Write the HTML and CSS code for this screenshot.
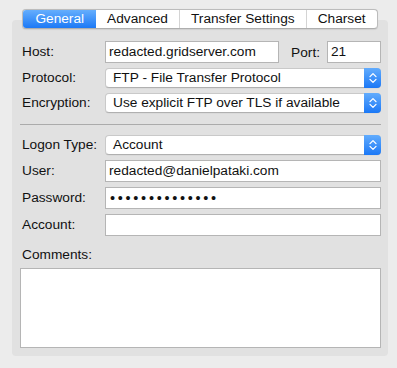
FILE: index.html
```html
<!DOCTYPE html>
<html>
<head>
<meta charset="utf-8">
<link rel="stylesheet" href="styles.css">
</head>
<body>
<div class="window">
  <div class="tabs">
    <div class="tab active">General</div>
    <div class="tab">Advanced</div>
    <div class="tab">Transfer Settings</div>
    <div class="tab">Charset</div>
  </div>
  <div class="panel">
    <div class="form">
      <div class="label">Host:</div>
      <div class="host-row">
        <div class="field host">redacted.gridserver.com</div>
        <div class="port-label">Port:</div>
        <div class="field port">21</div>
      </div>

      <div class="label">Protocol:</div>
      <div class="select"><span class="select-text">FTP - File Transfer Protocol</span><span class="stepper"><svg width="16" height="20" viewBox="0 0 16 20"><path d="M5 8.6 L8 5.6 L11 8.6 M5 11.4 L8 14.4 L11 11.4" fill="none" stroke="#fff" stroke-width="1.3" stroke-linecap="round" stroke-linejoin="round"/></svg></span></div>

      <div class="label">Encryption:</div>
      <div class="select"><span class="select-text">Use explicit FTP over TLS if available</span><span class="stepper"><svg width="16" height="20" viewBox="0 0 16 20"><path d="M5 8.6 L8 5.6 L11 8.6 M5 11.4 L8 14.4 L11 11.4" fill="none" stroke="#fff" stroke-width="1.3" stroke-linecap="round" stroke-linejoin="round"/></svg></span></div>

      <div class="separator"></div>

      <div class="label">Logon Type:</div>
      <div class="select"><span class="select-text">Account</span><span class="stepper"><svg width="16" height="20" viewBox="0 0 16 20"><path d="M5 8.6 L8 5.6 L11 8.6 M5 11.4 L8 14.4 L11 11.4" fill="none" stroke="#fff" stroke-width="1.3" stroke-linecap="round" stroke-linejoin="round"/></svg></span></div>

      <div class="label">User:</div>
      <div class="field">redacted@danielpataki.com</div>

      <div class="label">Password:</div>
      <div class="field password">••••••••••••••</div>

      <div class="label">Account:</div>
      <div class="field"></div>

      <div class="label comments-label">Comments:</div>
      <div class="textarea"></div>
    </div>
  </div>
</div>
</body>
</html>
```

FILE: styles.css
```css
* { box-sizing: border-box; }

html, body {
  margin: 0;
  background: #ececec;
}

body {
  font-family: "Liberation Sans", Arial, sans-serif;
  font-size: 13.7px;
  color: #111;
}

.window {
  display: flex;
  flex-direction: column;
  padding: 9px 9px 12px 12px;
}

.tabs {
  position: relative;
  z-index: 1;
  align-self: center;
  display: flex;
  height: 20px;
  background: #fff;
  border: 1px solid #bcbcbc;
  border-bottom-color: #aeaeae;
  border-radius: 4px;
  overflow: hidden;
  box-shadow: 0 0.5px 1px rgba(0,0,0,0.08);
}

.tab {
  padding: 0 11px;
  line-height: 18px;
  color: #111;
  border-left: 1px solid #d4d4d4;
  white-space: nowrap;
}

.tab:first-child { border-left: none; }

.tab.active {
  color: #fff;
  background: linear-gradient(#65aefd, #1c79f6);
  border-left: none;
  padding: 0 12px;
}

.tab.active + .tab { border-left: none; }

.panel {
  margin-top: -9px;
  background: #e1e1e1;
  border-radius: 4px;
  padding: 21px 7px 8px 8px;
}

.form {
  display: grid;
  grid-template-columns: 85px 1fr;
  row-gap: 5px;
  align-items: center;
}

.label {
  padding-left: 2px;
  white-space: nowrap;
  line-height: 16px;
}

.host-row {
  display: flex;
  align-items: center;
}

.field {
  height: 22px;
  background: #fff;
  border: 1px solid #b5b5b5;
  padding-left: 3px;
  line-height: 20px;
  white-space: nowrap;
  overflow: hidden;
}

.host { flex: 1; }

.port-label {
  margin: 0 7px 0 12px;
}

.port { width: 54px; }

.password {
  font-size: 14.5px;
  letter-spacing: 2.7px;
  padding-left: 4px;
}

.select {
  display: flex;
  align-items: center;
  height: 20px;
  background: #fff;
  border: 1px solid #c9c9c9;
  border-bottom-color: #b0b0b0;
  border-radius: 4px;
  box-shadow: 0 0.5px 0.5px rgba(0,0,0,0.06);
}

.select-text {
  flex: 1;
  padding-left: 7px;
  line-height: 18px;
  white-space: nowrap;
  overflow: hidden;
}

.stepper {
  align-self: stretch;
  width: 17px;
  margin: -1px -1px -1px 0;
  border-radius: 0 4px 4px 0;
  background: linear-gradient(#62acfd, #1b78f6);
  display: flex;
  align-items: center;
  justify-content: center;
}

.stepper svg { display: block; }

.separator {
  grid-column: 1 / -1;
  height: 1px;
  background: #ababab;
  margin: 6px 0 5px;
}

.comments-label {
  grid-column: 1 / -1;
  margin-top: 6px;
}

.textarea {
  grid-column: 1 / -1;
  height: 80px;
  background: #fff;
  border: 1px solid #b5b5b5;
}
```
